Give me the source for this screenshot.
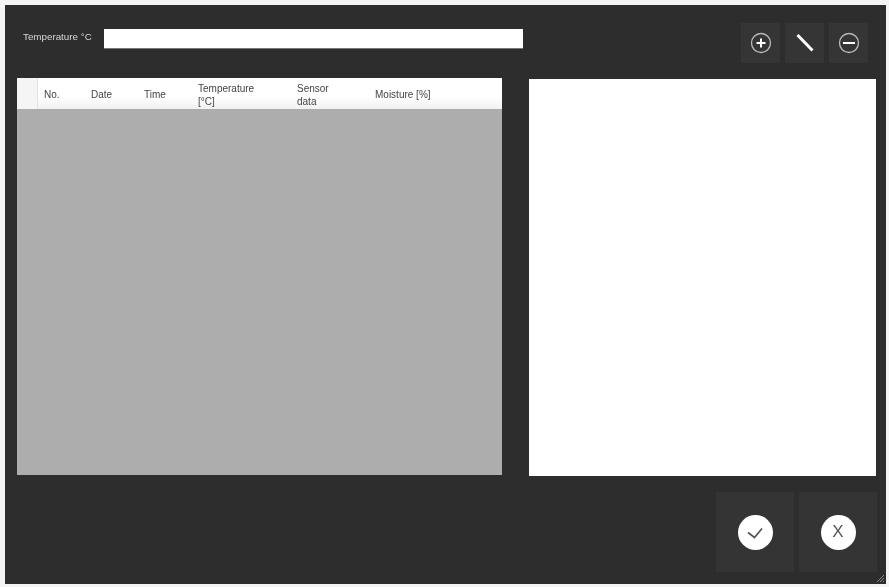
<style>
:global(body) { margin: 0; background: #f4f4f4; }
.page { width: 889px; height: 587px; box-sizing: border-box; padding: 5px 3px 3px 5px; font-family: "Liberation Sans", Arial, sans-serif; overflow: hidden; }
.win { position: relative; width: 881px; height: 579px; box-sizing: border-box; background: #2d2d2d; padding: 18px 9px 12px 12px; display: flex; flex-direction: column; filter: blur(0.5px); }
.top { display: flex; align-items: flex-start; height: 56px; }
.label { width: 81px; margin: 8px 0 0 6px; font-size: 9.8px; line-height: 12px; color: #d8d8d8; white-space: nowrap; filter: blur(0.3px); }
.input { width: 419px; height: 19px; margin-top: 6px; background: #fff; box-shadow: 0 1px 0 #777; }
.tools { margin-left: auto; display: flex; gap: 5px; padding-right: 9px; }
.tool { width: 39px; height: 40px; background: #353535; display: flex; align-items: center; justify-content: center; }
.main { display: flex; gap: 27px; height: 397px; }
.table { width: 485px; background: #adadad; }
.head { height: 31px; box-sizing: border-box; background: linear-gradient(#fff 60%, #f1f1f1); display: flex; align-items: center; font-size: 10px; line-height: 13px; color: #444; }
.c0 { width: 21px; height: 100%; box-sizing: border-box; background: #f5f5f5; border-right: 1px solid #e2e2e2; }
.c { box-sizing: border-box; padding: 2px 0 0 6px; filter: blur(0.3px); }
.panel { width: 347px; height: 397px; margin-top: 1px; background: #fff; }
.bottom { display: flex; justify-content: flex-end; gap: 5px; margin-top: 17px; }
.big { width: 78px; height: 80px; background: #343434; display: flex; align-items: center; justify-content: center; }
.x { width: 35px; height: 35px; border-radius: 50%; background: #fff; display: flex; align-items: center; justify-content: center; color: #555; font-size: 17px; }
.grip { position: absolute; right: 1px; bottom: 1px; }
</style>

<div class="page">
  <div class="win">
    <div class="top">
      <div class="label">Temperature °C</div>
      <div class="input"></div>
      <div class="tools">
        <div class="tool">
          <svg width="22" height="22" viewBox="0 0 22 22" fill="none" stroke="#bbb"><circle cx="11" cy="11" r="9.5" stroke-width="1.3"/><path d="M6.5 11h9M11 6.5v9" stroke="#fff" stroke-width="2"/></svg>
        </div>
        <div class="tool">
          <svg width="24" height="24" viewBox="0 0 24 24" fill="none"><path d="M4.5 4L19.5 19.5" stroke="#fff" stroke-width="3"/></svg>
        </div>
        <div class="tool">
          <svg width="22" height="22" viewBox="0 0 22 22" fill="none" stroke="#bbb"><circle cx="11" cy="11" r="9.5" stroke-width="1.3"/><path d="M5 11h12" stroke="#fff" stroke-width="2"/></svg>
        </div>
      </div>
    </div>
    <div class="main">
      <div class="table">
        <div class="head">
          <div class="c0"></div>
          <div class="c" style="width:47px">No.</div>
          <div class="c" style="width:53px">Date</div>
          <div class="c" style="width:54px">Time</div>
          <div class="c" style="width:99px">Temperature<br />[°C]</div>
          <div class="c" style="width:78px">Sensor<br />data</div>
          <div class="c" style="width:100px">Moisture [%]</div>
        </div>
      </div>
      <div class="panel"></div>
    </div>
    <div class="bottom">
      <div class="big">
        <div class="x">
          <svg width="22" height="22" viewBox="0 0 22 22" fill="none"><path d="M4 11.5L10.5 16.5L18 7.5" stroke="#555" stroke-width="1.7"/></svg>
        </div>
      </div>
      <div class="big"><div class="x">X</div></div>
    </div>
    <svg class="grip" width="9" height="9" viewBox="0 0 9 9" fill="none" stroke="#888"><path d="M1 8L8 1M4 8L8 4M7 8L8 7"/></svg>
  </div>
</div>
